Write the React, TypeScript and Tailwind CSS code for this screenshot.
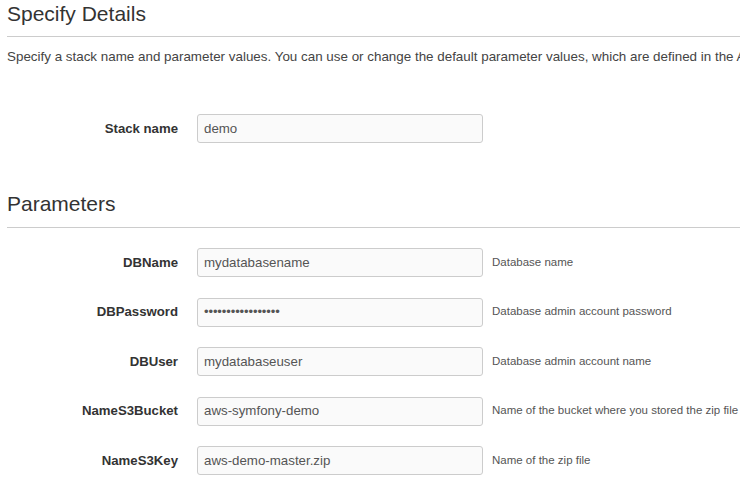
const params = [
  { name: "DBName", value: "mydatabasename", help: "Database name" },
  { name: "DBPassword", value: "•••••••••••••••••", help: "Database admin account password", password: true },
  { name: "DBUser", value: "mydatabaseuser", help: "Database admin account name" },
  { name: "NameS3Bucket", value: "aws-symfony-demo", help: "Name of the bucket where you stored the zip file" },
  { name: "NameS3Key", value: "aws-demo-master.zip", help: "Name of the zip file" },
];

const Field = ({ label, value, help, password }: { label: string; value: string; help?: string; password?: boolean }) => (
  <div className="flex items-center h-[29px]">
    <div className="w-[178px] shrink-0 text-right text-[13.2px] font-bold text-[#333]">{label}</div>
    <div
      className={`ml-[19px] w-[286px] h-[29px] shrink-0 flex items-center px-[6px] border border-[#ccc] rounded-[3px] bg-[#fafafa] text-[#555] ${
        password ? "text-[13px] tracking-[-0.1px]" : "text-[13.3px]"
      }`}
    >
      {value}
    </div>
    {help && <div className="ml-[9px] text-[11.5px] text-[#555] whitespace-nowrap">{help}</div>}
  </div>
);

export default function App() {
  return (
    <div className="w-[740px] h-[484px] overflow-hidden bg-white font-['Liberation_Sans',Arial,sans-serif]">
      {/* Specify Details */}
      <h1 className="pl-[7px] pt-[1px] text-[21px] leading-[26px] text-[#333]">Specify Details</h1>
      <div className="ml-[7px] mt-[9px] border-t border-[#ccc]" />
      <p className="pl-[7px] mt-[11px] text-[13.4px] leading-[18px] text-[#444] whitespace-nowrap overflow-hidden">
        Specify a stack name and parameter values. You can use or change the default parameter values, which are defined in the AWS CloudFormation template.
      </p>

      <div className="mt-[48px]">
        <Field label="Stack name" value="demo" />
      </div>

      {/* Parameters */}
      <h2 className="pl-[7px] mt-[48px] text-[21px] leading-[26px] text-[#333]">Parameters</h2>
      <div className="ml-[7px] mt-[10px] border-t border-[#ccc]" />

      <div className="mt-[20px] flex flex-col gap-[20.5px]">
        {params.map((p) => (
          <Field key={p.name} label={p.name} value={p.value} help={p.help} password={p.password} />
        ))}
      </div>
    </div>
  );
}
